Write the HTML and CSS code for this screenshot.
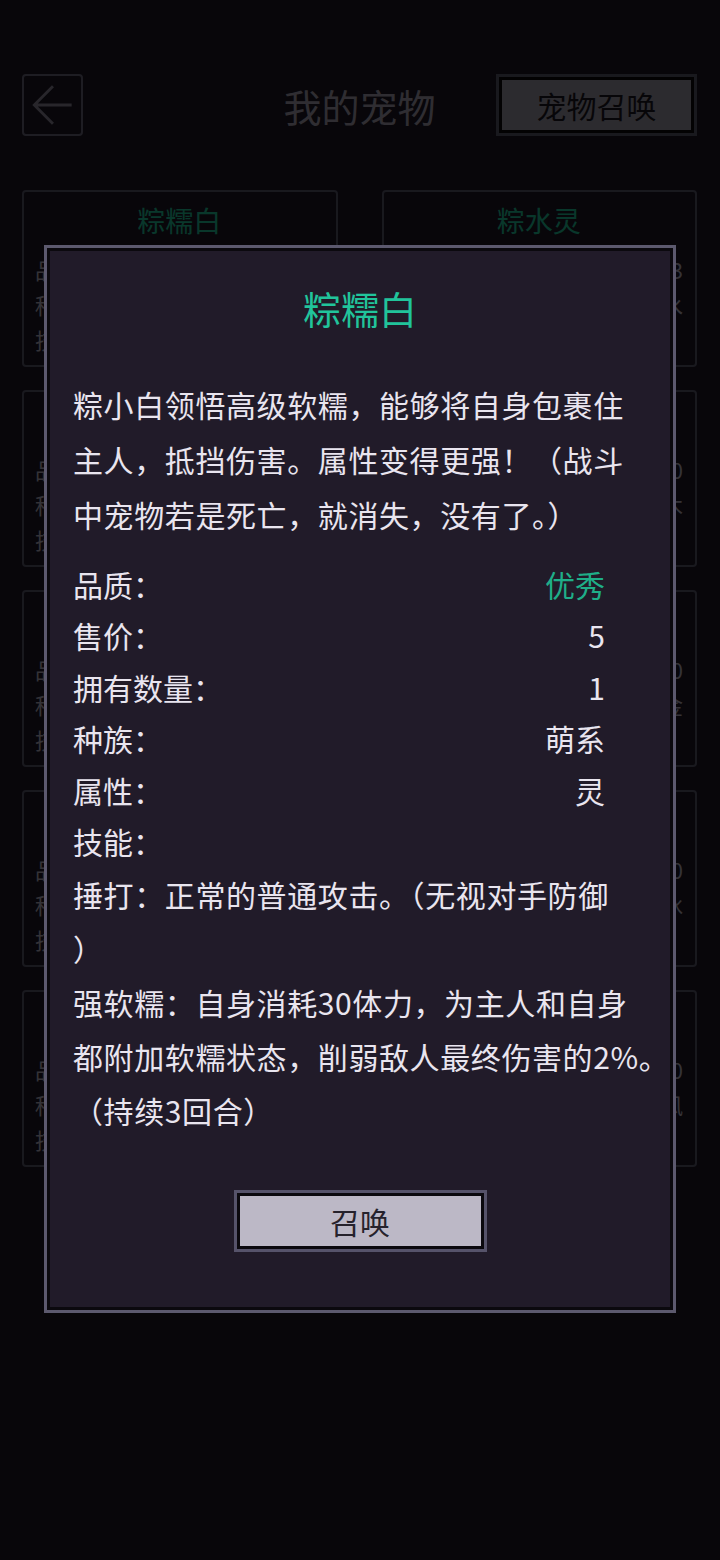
FILE: index.html
```html
<!DOCTYPE html>
<html lang="zh-CN">
<head>
  <meta charset="UTF-8">
  <meta name="viewport" content="width=device-width, initial-scale=1">
  <title>我的宠物</title>
  <link rel="stylesheet" href="styles.css">
</head>
<body>
  <div class="page">
    <header class="top-bar">
      <button class="back-btn">
        <svg width="61" height="58" viewBox="0 0 61 58">
          <path d="M51 29 H11 M31 9 L11 29 L31 49" fill="none" stroke="#8f8a9c" stroke-width="3"/>
        </svg>
      </button>
      <h1 class="page-title">我的宠物</h1>
      <button class="summon-link">宠物召唤</button>
    </header>

    <div class="pet-grid">
      <div class="pet-card">
        <div class="pet-name">粽糯白</div>
        <div class="pet-line"><span>品质：优秀</span><span>数量：1</span></div>
        <div class="pet-line"><span>种族：萌系</span><span>属性：灵</span></div>
        <div class="pet-line"><span>技能：捶打</span><span></span></div>
      </div>
      <div class="pet-card">
        <div class="pet-name">粽水灵</div>
        <div class="pet-line"><span>品质：普通</span><span>数量：3</span></div>
        <div class="pet-line"><span>种族：萌系</span><span>属性：水</span></div>
        <div class="pet-line"><span>技能：捶打</span><span></span></div>
      </div>
      <div class="pet-card">
        <div class="pet-name">粽火灵</div>
        <div class="pet-line"><span>品质：普通</span><span>数量：2</span></div>
        <div class="pet-line"><span>种族：萌系</span><span>属性：火</span></div>
        <div class="pet-line"><span>技能：捶打</span><span></span></div>
      </div>
      <div class="pet-card">
        <div class="pet-name">粽木灵</div>
        <div class="pet-line"><span>品质：普通</span><span>数量：0</span></div>
        <div class="pet-line"><span>种族：萌系</span><span>属性：木</span></div>
        <div class="pet-line"><span>技能：捶打</span><span></span></div>
      </div>
      <div class="pet-card">
        <div class="pet-name">粽土灵</div>
        <div class="pet-line"><span>品质：普通</span><span>数量：2</span></div>
        <div class="pet-line"><span>种族：萌系</span><span>属性：土</span></div>
        <div class="pet-line"><span>技能：捶打</span><span></span></div>
      </div>
      <div class="pet-card">
        <div class="pet-name">粽金灵</div>
        <div class="pet-line"><span>品质：普通</span><span>数量：0</span></div>
        <div class="pet-line"><span>种族：萌系</span><span>属性：金</span></div>
        <div class="pet-line"><span>技能：捶打</span><span></span></div>
      </div>
      <div class="pet-card">
        <div class="pet-name">粽小白</div>
        <div class="pet-line"><span>品质：普通</span><span>数量：3</span></div>
        <div class="pet-line"><span>种族：萌系</span><span>属性：灵</span></div>
        <div class="pet-line"><span>技能：捶打</span><span></span></div>
      </div>
      <div class="pet-card">
        <div class="pet-name">粽冰灵</div>
        <div class="pet-line"><span>品质：普通</span><span>数量：0</span></div>
        <div class="pet-line"><span>种族：萌系</span><span>属性：冰</span></div>
        <div class="pet-line"><span>技能：捶打</span><span></span></div>
      </div>
      <div class="pet-card">
        <div class="pet-name">粽雷灵</div>
        <div class="pet-line"><span>品质：普通</span><span>数量：3</span></div>
        <div class="pet-line"><span>种族：萌系</span><span>属性：雷</span></div>
        <div class="pet-line"><span>技能：捶打</span><span></span></div>
      </div>
      <div class="pet-card">
        <div class="pet-name">粽风灵</div>
        <div class="pet-line"><span>品质：普通</span><span>数量：0</span></div>
        <div class="pet-line"><span>种族：萌系</span><span>属性：风</span></div>
        <div class="pet-line"><span>技能：捶打</span><span></span></div>
      </div>
    </div>
  </div>

  <div class="mask">
    <div class="dialog">
      <h2 class="dialog-title">粽糯白</h2>
      <p class="desc">粽小白领悟高级软糯，能够将自身包裹住<br>主人，抵挡伤害。属性变得更强！（战斗<br>中宠物若是死亡，就消失，没有了。）</p>

      <div class="stats">
        <div class="stat"><span>品质：</span><span class="good">优秀</span></div>
        <div class="stat"><span>售价：</span><span>5</span></div>
        <div class="stat"><span>拥有数量：</span><span>1</span></div>
        <div class="stat"><span>种族：</span><span>萌系</span></div>
        <div class="stat"><span>属性：</span><span>灵</span></div>
        <div class="stat"><span>技能：</span><span></span></div>
      </div>

      <div class="skills">
        <p>捶打：正常的普通攻击。（无视对手防御<br>）</p>
        <p>强软糯：自身消耗30体力，为主人和自身<br>都附加软糯状态，削弱敌人最终伤害的2%。<br>（持续3回合）</p>
      </div>

      <button class="summon-btn">召唤</button>
    </div>
  </div>
</body>
</html>
```

FILE: styles.css
```css
body {
  margin: 0;
  background: #1d1725;
  font-family: "Noto Sans CJK SC", "Noto Sans", sans-serif;
  color: #e9e5ef;
  width: 720px;
  height: 1560px;
  overflow: hidden;
}

button {
  font-family: inherit;
  cursor: pointer;
}

/* page behind the dialog */
.top-bar {
  display: grid;
  grid-template-columns: 1fr auto 1fr;
  align-items: center;
  padding: 74px 23px 0 22px;
}

.back-btn {
  justify-self: start;
  width: 61px;
  height: 62px;
  padding: 0;
  background: none;
  border: 2px solid #6e6a7e;
  border-radius: 4px;
  display: flex;
  align-items: center;
  justify-content: center;
}

.page-title {
  margin: 0;
  font-size: 38px;
  font-weight: normal;
  color: #a8a3b2;
}

.summon-link {
  justify-self: end;
  width: 201px;
  height: 62px;
  font-size: 30px;
  color: #1c1820;
  background: #9e9aaa;
  border: 3px solid #5c596e;
  box-shadow: inset 0 0 0 3px #0b090e;
}

.pet-grid {
  display: grid;
  grid-template-columns: 1fr 1fr;
  gap: 23px 44px;
  padding: 54px 23px 0 22px;
}

.pet-card {
  height: 177px;
  box-sizing: border-box;
  border: 2px solid #5c596e;
  border-radius: 4px;
  padding: 10px 12px 0 11px;
}

.pet-name {
  text-align: center;
  font-size: 28px;
  line-height: 36px;
  color: #21c49b;
  margin-bottom: 14px;
}

.pet-line {
  display: flex;
  justify-content: space-between;
  font-size: 22px;
  line-height: 35px;
  color: #b9b4c4;
}

/* dialog */
.mask {
  position: fixed;
  inset: 0;
  background: rgba(0, 0, 0, 0.72);
  display: flex;
  justify-content: center;
  align-items: flex-start;
  padding-top: 245px;
}

.dialog {
  width: 632px;
  box-sizing: border-box;
  background: #211b29;
  border: 3px solid #5c596e;
  box-shadow: inset 0 0 0 3px #0b090e;
  padding: 36px 26px 58px 26px;
  display: flex;
  flex-direction: column;
}

.dialog-title {
  margin: 0;
  text-align: center;
  font-size: 38px;
  line-height: 48px;
  font-weight: normal;
  color: #21c49b;
}

.desc {
  margin: 45px 0 0;
  font-size: 30px;
  line-height: 55px;
  letter-spacing: 0.6px;
  white-space: nowrap;
}

.stats {
  margin-top: 17px;
  padding-right: 42px;
}

.stat {
  display: flex;
  justify-content: space-between;
  font-size: 30px;
  line-height: 51.4px;
}

.good {
  color: #1fae88;
}

.skills p {
  margin: 0;
  font-size: 30px;
  line-height: 54px;
  letter-spacing: 0.6px;
  white-space: nowrap;
}

.summon-btn {
  align-self: center;
  margin-top: 53px;
  width: 253px;
  height: 62px;
  font-size: 30px;
  color: #26222c;
  background: #bcb8c6;
  border: 3px solid #56536a;
  box-shadow: inset 0 0 0 3px #0b090e;
}
```
